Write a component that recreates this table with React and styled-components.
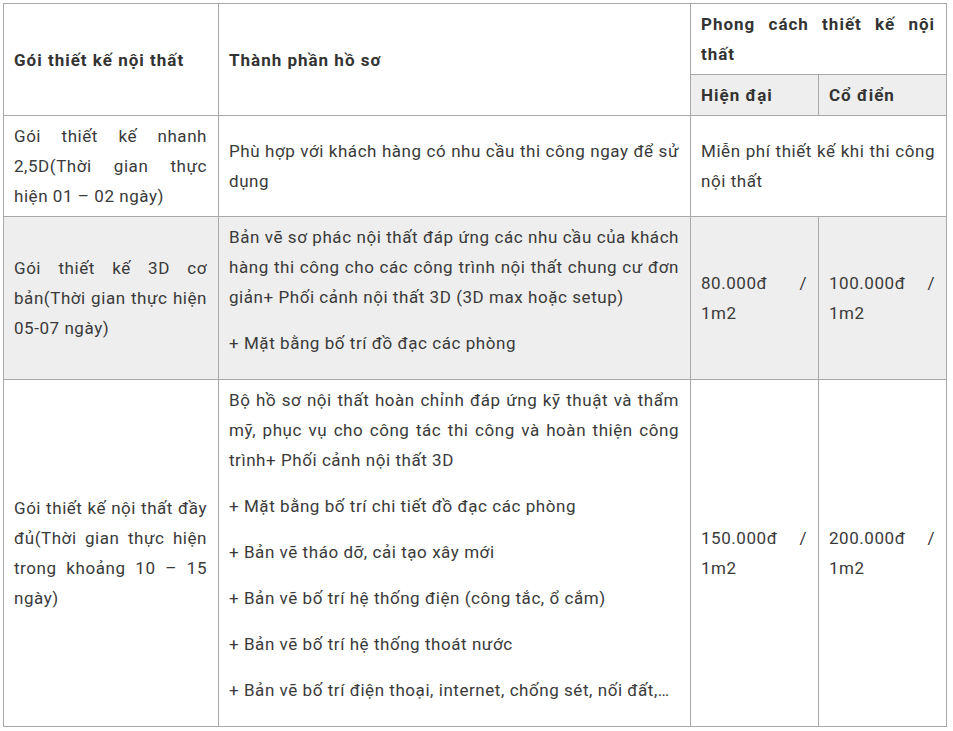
import React from "react";
import styled, { createGlobalStyle } from "styled-components";

const GlobalStyle = createGlobalStyle`
  html, body {
    margin: 0;
    padding: 0;
    background: #ffffff;
  }
  body {
    font-family: Roboto, "Liberation Sans", sans-serif;
  }
`;

const Page = styled.div`
  padding: 3px;
  width: 953px;
  box-sizing: border-box;
`;

const Table = styled.table`
  width: 944px;
  table-layout: fixed;
  border-collapse: collapse;
  color: #3a3a3a;
  font-size: 17px;
  line-height: 30px;
  letter-spacing: 0.55px;
`;

const Cell = styled.td`
  border: 1px solid #a8a8a8;
  padding: 5px 11px 5px 10px;
  vertical-align: middle;
  text-align: justify;
  background: ${(p) => (p.$shaded ? "#eeeeee" : "#ffffff")};
`;

const HeadCell = styled(Cell).attrs({ as: "th" })`
  font-weight: 700;
  color: #333333;
  letter-spacing: 1px;
`;

const Para = styled.p`
  margin: 0 0 16px;
`;

const packages = [
  {
    name: "Gói thiết kế nhanh 2,5D(Thời gian thực hiện 01 – 02 ngày)",
    docs: ["Phù hợp với khách hàng có nhu cầu thi công ngay để sử dụng"],
    free: "Miễn phí thiết kế khi thi công nội thất",
  },
  {
    name: "Gói thiết kế 3D cơ bản(Thời gian thực hiện 05-07 ngày)",
    docs: [
      "Bản vẽ sơ phác nội thất đáp ứng các nhu cầu của khách hàng thi công cho các công trình nội thất chung cư đơn giản+ Phối cảnh nội thất 3D (3D max hoặc setup)",
      "+ Mặt bằng bố trí đồ đạc các phòng",
    ],
    modern: "80.000đ / 1m2",
    classic: "100.000đ / 1m2",
    shaded: true,
  },
  {
    name: "Gói thiết kế nội thất đầy đủ(Thời gian thực hiện trong khoảng 10 – 15 ngày)",
    docs: [
      "Bộ hồ sơ nội thất hoàn chỉnh đáp ứng kỹ thuật và thẩm mỹ, phục vụ cho công tác thi công và hoàn thiện công trình+ Phối cảnh nội thất 3D",
      "+ Mặt bằng bố trí chi tiết đồ đạc các phòng",
      "+ Bản vẽ tháo dỡ, cải tạo xây mới",
      "+ Bản vẽ bố trí hệ thống điện (công tắc, ổ cắm)",
      "+ Bản vẽ bố trí hệ thống thoát nước",
      "+ Bản vẽ bố trí điện thoại, internet, chống sét, nối đất,…",
    ],
    modern: "150.000đ / 1m2",
    classic: "200.000đ / 1m2",
  },
];

function Docs({ items }) {
  if (items.length === 1) return items[0];
  return items.map((t) => <Para key={t}>{t}</Para>);
}

export default function App() {
  return (
    <Page>
      <GlobalStyle />
      <Table>
        <colgroup>
          <col style={{ width: 215 }} />
          <col style={{ width: 472 }} />
          <col style={{ width: 128 }} />
          <col style={{ width: 128 }} />
        </colgroup>
        <thead>
          <tr>
            <HeadCell rowSpan={2}>Gói thiết kế nội thất</HeadCell>
            <HeadCell rowSpan={2}>Thành phần hồ sơ</HeadCell>
            <HeadCell colSpan={2}>Phong cách thiết kế nội thất</HeadCell>
          </tr>
          <tr>
            <HeadCell $shaded>Hiện đại</HeadCell>
            <HeadCell $shaded>Cổ điển</HeadCell>
          </tr>
        </thead>
        <tbody>
          {packages.map((p) => (
            <tr key={p.name}>
              <Cell $shaded={p.shaded}>{p.name}</Cell>
              <Cell $shaded={p.shaded}>
                <Docs items={p.docs} />
              </Cell>
              {p.free ? (
                <Cell colSpan={2}>{p.free}</Cell>
              ) : (
                <>
                  <Cell $shaded={p.shaded}>{p.modern}</Cell>
                  <Cell $shaded={p.shaded}>{p.classic}</Cell>
                </>
              )}
            </tr>
          ))}
        </tbody>
      </Table>
    </Page>
  );
}
